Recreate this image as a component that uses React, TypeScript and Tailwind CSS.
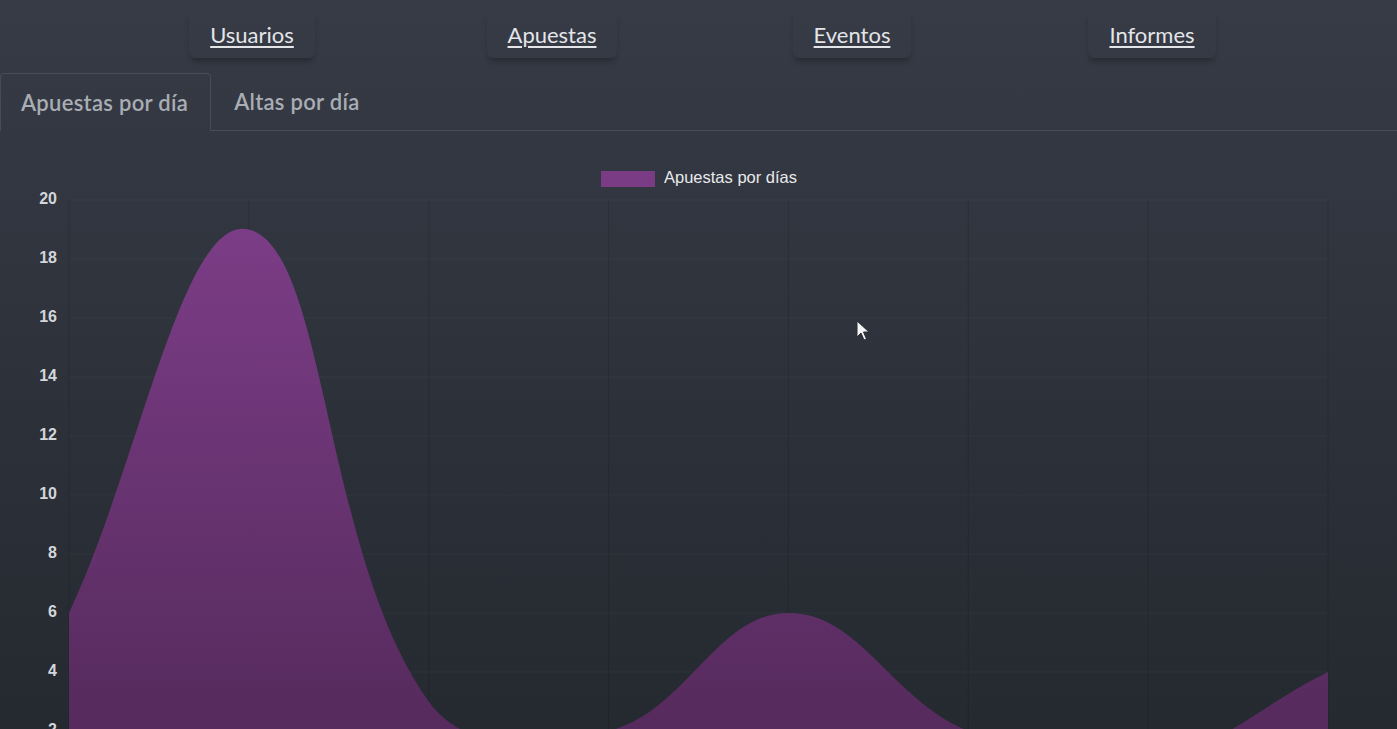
import React from 'react';

const links = ['Usuarios', 'Apuestas', 'Eventos', 'Informes'];

// Apuestas por día
const data = [6, 19, 3, 2, 6, 2, 1, 4];
const ticks = [20, 18, 16, 14, 12, 10, 8, 6, 4, 2];

const X0 = 69;
const X1 = 1328;
const Y0 = 790; // value 0
const PER_UNIT = 29.5;
const TOP = 131; // where the chart svg starts on the page

type Pt = { x: number; y: number };

const px = (i: number) => X0 + ((X1 - X0) * i) / (data.length - 1);
const py = (v: number) => Y0 - v * PER_UNIT;

function spline(prev: Pt, cur: Pt, next: Pt, t: number) {
  const d01 = Math.hypot(cur.x - prev.x, cur.y - prev.y);
  const d12 = Math.hypot(next.x - cur.x, next.y - cur.y);
  const s01 = d01 + d12 ? d01 / (d01 + d12) : 0;
  const s12 = d01 + d12 ? d12 / (d01 + d12) : 0;
  const fa = t * s01;
  const fb = t * s12;
  return {
    prev: { x: cur.x - fa * (next.x - prev.x), y: cur.y - fa * (next.y - prev.y) },
    next: { x: cur.x + fb * (next.x - prev.x), y: cur.y + fb * (next.y - prev.y) },
  };
}

function areaPath() {
  const pts = data.map((v, i) => ({ x: px(i), y: py(v) }));
  const cps = pts.map((p, i) => spline(pts[i - 1] ?? p, p, pts[i + 1] ?? p, 0.4));
  let d = `M${pts[0].x},${pts[0].y}`;
  for (let i = 1; i < pts.length; i++) {
    const a = cps[i - 1].next;
    const b = cps[i].prev;
    d += ` C${a.x},${a.y} ${b.x},${b.y} ${pts[i].x},${pts[i].y}`;
  }
  d += ` L${X1},${Y0} L${X0},${Y0} Z`;
  return d;
}

function Chart() {
  return (
    <svg width={1397} height={700} viewBox={`0 ${TOP} 1397 700`} className="block">
      <defs>
        <linearGradient id="fill" gradientUnits="userSpaceOnUse" x1="0" y1="220" x2="0" y2="740">
          <stop offset="0" stopColor="#7c3d87" />
          <stop offset="1" stopColor="#552a5c" />
        </linearGradient>
      </defs>

      {/* legend */}
      <rect x={601} y={171} width={54} height={16} fill="#7b3c86" />
      <text
        x={664}
        y={179}
        dominantBaseline="middle"
        fill="#e9eaec"
        fontSize={16.5}
        fontFamily="'Liberation Sans', Arial, sans-serif"
      >
        Apuestas por días
      </text>

      {ticks.map(t => (
        <line key={t} x1={X0} x2={X1} y1={py(t)} y2={py(t)} stroke="rgba(255,255,255,0.03)" />
      ))}
      {data.map((_, i) => (
        <line key={i} x1={px(i)} x2={px(i)} y1={py(20)} y2={Y0} stroke="rgba(0,0,0,0.12)" />
      ))}
      <path d={areaPath()} fill="url(#fill)" />
      {ticks.map(t => (
        <text
          key={t}
          x={57}
          y={py(t)}
          textAnchor="end"
          dominantBaseline="middle"
          fill="#d3d6da"
          fontSize={16}
          fontWeight={700}
          fontFamily="'Liberation Sans', Arial, sans-serif"
        >
          {t}
        </text>
      ))}
    </svg>
  );
}

export default function App() {
  return (
    <div className="relative h-screen overflow-hidden bg-gradient-to-b from-[#363b46] to-[#252930] font-['Lato',sans-serif]">
      <nav className="grid grid-cols-[repeat(4,300px)] pl-[102px] pt-[10px]">
        {links.map(l => (
          <div key={l} className="flex justify-center">
            <a className="flex h-[48px] items-center rounded-md px-[21px] text-[22px] text-[#e3e5e9] underline underline-offset-[3px] shadow-[0_5px_6px_-2px_rgba(0,0,0,0.3)]">
              {l}
            </a>
          </div>
        ))}
      </nav>

      <div className="mt-[15px] flex text-[22px] font-semibold tracking-[0.3px] text-[#a9adb4]">
        <div className="flex h-[58px] items-center rounded-t-[4px] border-x border-t border-[#474c56] pl-[20px] pr-[22px]">
          Apuestas por día
        </div>
        <div className="flex h-[58px] items-center border-b border-[#474c56] px-[23px]">
          Altas por día
        </div>
        <div className="h-[58px] flex-1 border-b border-[#474c56]" />
      </div>

      <Chart />

      <svg className="absolute left-[856px] top-[320px]" width="14" height="22" viewBox="0 0 14 22">
        <path d="M1 1 L1 17 L5 13 L8 20 L10.5 19 L7.5 12 L13 12 Z" fill="#f4f4f4" stroke="#2a2e36" strokeWidth="1" strokeLinejoin="round" />
      </svg>
    </div>
  );
}
